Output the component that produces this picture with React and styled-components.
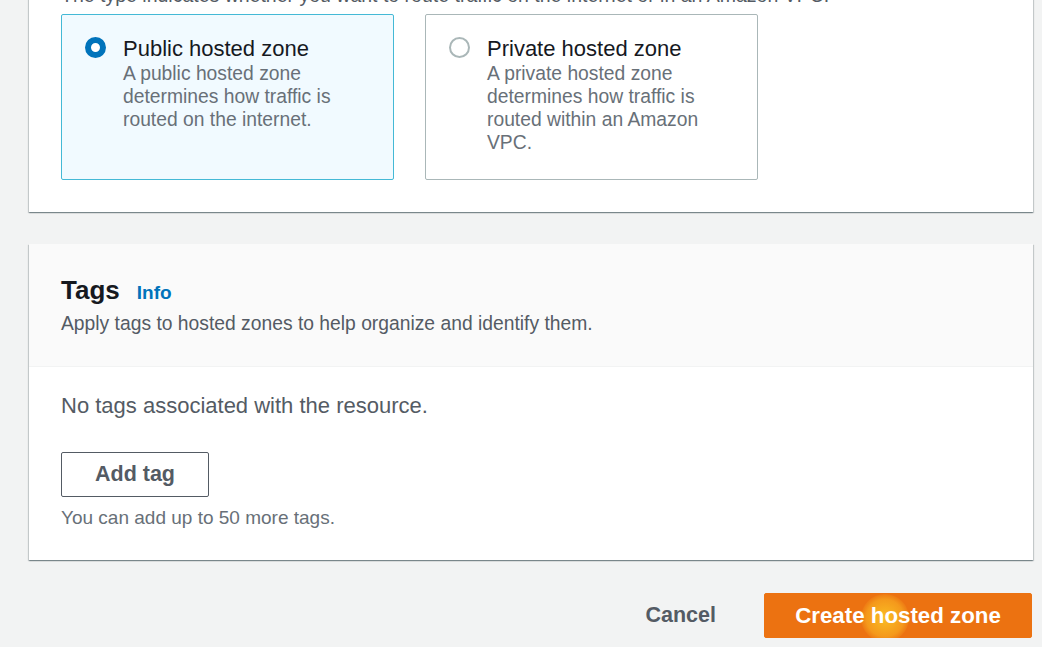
import styled, { createGlobalStyle } from 'styled-components'

const Global = createGlobalStyle`
	html, body {
		margin: 0;
		padding: 0;
		background: #f2f3f3;
		overflow: hidden;
	}
	body {
		font-family: 'Liberation Sans', Arial, sans-serif;
		color: #16191f;
	}
`

const Page = styled.div`
	display: flex;
	flex-direction: column;
	gap: 32px;
	padding: 0 9px 0 29px;
	margin-top: -16px;
`

const Panel = styled.section`
	background: #fff;
	box-shadow: 0 1px 1px 0 rgba(0, 28, 36, 0.3), 1px 1px 1px 0 rgba(0, 28, 36, 0.15),
		-1px 1px 1px 0 rgba(0, 28, 36, 0.15);
`

const TypePanel = styled(Panel)`
	padding: 0 32px 32px;
`

const Hint = styled.div`
	font-size: 19.5px;
	line-height: 23px;
	color: #545b64;
	white-space: nowrap;
	margin-bottom: 7px;
`

const Tiles = styled.div`
	display: flex;
	gap: 31px;
`

const Tile = styled.label`
	box-sizing: border-box;
	width: 333px;
	height: 166px;
	display: flex;
	gap: 17px;
	padding: 20px 23px;
	border: 1px solid ${(p) => (p.$on ? '#44b9d6' : '#aab7b8')};
	background: ${(p) => (p.$on ? '#f1faff' : '#fff')};
	border-radius: 2px;
`

const Radio = styled.span`
	box-sizing: border-box;
	flex: none;
	width: 21px;
	height: 21px;
	margin-top: 2px;
	border-radius: 50%;
	border: ${(p) => (p.$on ? '6px solid #0073bb' : '2px solid #aab7b8')};
	background: #fff;
`

const TileText = styled.div`
	display: flex;
	flex-direction: column;
`

const TileTitle = styled.span`
	font-size: 22px;
	line-height: 27px;
	color: #16191f;
`

const TileDesc = styled.span`
	font-size: 19.3px;
	line-height: 23px;
	color: #687078;
`

const Header = styled.div`
	background: #fafafa;
	padding: 31px 32px 31px;
	border-bottom: 1px solid #f2f3f3;
`

const TitleRow = styled.div`
	display: flex;
	align-items: baseline;
	gap: 17px;
`

const H2 = styled.h2`
	margin: 0;
	font-size: 26px;
	line-height: 31px;
	font-weight: 700;
	color: #16191f;
`

const InfoLink = styled.a`
	font-size: 19px;
	font-weight: 700;
	color: #0073bb;
	text-decoration: none;
`

const HeaderDesc = styled.p`
	margin: 6px 0 0;
	font-size: 19.3px;
	line-height: 23px;
	color: #545b64;
`

const Body = styled.div`
	padding: 26px 32px 31px;
	display: flex;
	flex-direction: column;
	align-items: flex-start;
`

const Empty = styled.p`
	margin: 0 0 34px;
	font-size: 22px;
	line-height: 25px;
	color: #545b64;
`

const Button = styled.button`
	box-sizing: border-box;
	height: 45px;
	font-family: inherit;
	font-size: 21.5px;
	font-weight: 700;
	border-radius: 2px;
	cursor: pointer;
`

const NormalButton = styled(Button)`
	width: 148px;
	background: #fff;
	color: #545b64;
	border: 1px solid #545b64;
`

const Small = styled.p`
	margin: 10px 0 0;
	font-size: 19px;
	line-height: 22px;
	color: #687078;
`

const Footer = styled.div`
	display: flex;
	justify-content: flex-end;
	align-items: center;
	gap: 28px;
	margin-top: 1px;
	padding-right: 1px;
`

const LinkButton = styled(Button)`
	background: none;
	border: none;
	color: #545b64;
	padding: 0 20px;
`

const PrimaryButton = styled(Button)`
	position: relative;
	width: 268px;
	font-size: 22.3px;
	background: #ec7211;
	border: 1px solid #ec7211;
	color: #fff;
`

const Glow = styled.span`
	position: absolute;
	left: 96px;
	top: 0;
	width: 48px;
	height: 48px;
	border-radius: 50%;
	background: radial-gradient(circle, rgba(255, 214, 40, 0.75) 0%, rgba(255, 200, 40, 0.45) 55%, rgba(255, 190, 40, 0) 75%);
	pointer-events: none;
`

const Label = styled.span`
	position: relative;
`

export default function App() {
	return (
		<>
			<Global />
			<Page>
				<TypePanel>
					<Hint>The type indicates whether you want to route traffic on the internet or in an Amazon VPC.</Hint>
					<Tiles>
						<Tile $on>
							<Radio $on />
							<TileText>
								<TileTitle>Public hosted zone</TileTitle>
								<TileDesc>
									A public hosted zone
									<br />
									determines how traffic is
									<br />
									routed on the internet.
								</TileDesc>
							</TileText>
						</Tile>
						<Tile>
							<Radio />
							<TileText>
								<TileTitle>Private hosted zone</TileTitle>
								<TileDesc>
									A private hosted zone
									<br />
									determines how traffic is
									<br />
									routed within an Amazon
									<br />
									VPC.
								</TileDesc>
							</TileText>
						</Tile>
					</Tiles>
				</TypePanel>
				<Panel>
					<Header>
						<TitleRow>
							<H2>Tags</H2>
							<InfoLink href="#">Info</InfoLink>
						</TitleRow>
						<HeaderDesc>Apply tags to hosted zones to help organize and identify them.</HeaderDesc>
					</Header>
					<Body>
						<Empty>No tags associated with the resource.</Empty>
						<NormalButton>Add tag</NormalButton>
						<Small>You can add up to 50 more tags.</Small>
					</Body>
				</Panel>
				<Footer>
					<LinkButton>Cancel</LinkButton>
					<PrimaryButton>
						<Glow />
						<Label>Create hosted zone</Label>
					</PrimaryButton>
				</Footer>
			</Page>
		</>
	)
}
